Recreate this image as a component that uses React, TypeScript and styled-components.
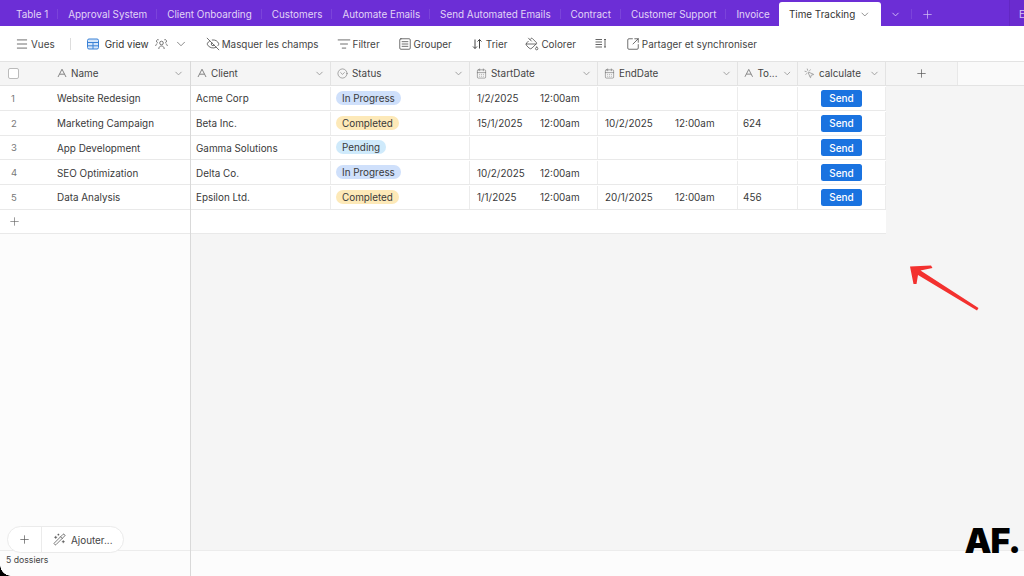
import React from "react";
import styled, { createGlobalStyle } from "styled-components";
import {
  ChevronDown,
  CircleChevronDown,
  EyeOff,
  ListFilter,
  Menu,
  MousePointerClick,
  PaintBucket,
  Plus,
  SquareArrowOutUpRight,
  SquareMenu,
  WandSparkles,
  CalendarDays,
} from "lucide-react";

const GlobalStyle = createGlobalStyle`
  html, body {
    margin: 0;
    padding: 0;
    height: 100%;
    overflow: hidden;
  }
  * { box-sizing: border-box; }
  body {
    font-family: Inter, "Liberation Sans", sans-serif;
    font-size: 9.9px;
    color: #3a3a3a;
  }
`;

const Page = styled.div`
  position: relative;
  width: 1024px;
  height: 576px;
  display: flex;
  flex-direction: column;
  overflow: hidden;
  background: #fff;

  &::after {
    content: "";
    position: absolute;
    left: 0;
    bottom: 0;
    width: 11px;
    height: 11px;
    background: radial-gradient(circle at 100% 0, transparent 10.5px, #000 11px);
  }
`;

const TabBar = styled.div`
  height: 26px;
  flex: none;
  display: flex;
  align-items: flex-end;
  padding-left: 6px;
  background: #6c2ed6;
  color: #e2d5f7;
`;

const Tab = styled.div`
  height: 24px;
  display: flex;
  align-items: center;
  padding: 0 10px;
  white-space: nowrap;
  position: relative;

  &:not(:nth-last-of-type(1))::after {
    content: "";
    position: absolute;
    right: 0;
    top: 7px;
    height: 10px;
    width: 1px;
    background: rgba(255, 255, 255, 0.1);
  }
`;

const ActiveTab = styled.div`
  height: 24px;
  width: 102px;
  margin-left: -1px;
  display: flex;
  align-items: center;
  gap: 4px;
  padding: 0 10px;
  background: #fff;
  color: #333;
  border-radius: 3px 3px 0 0;
  white-space: nowrap;
`;

const TabIcons = styled.div`
  display: flex;
  align-items: center;
  height: 24px;
  padding-left: 9.5px;
  color: #d6c4f5;
`;

const TabIconDivider = styled.span`
  width: 1px;
  height: 10px;
  margin: 0 9px 0 10px;
  background: rgba(255, 255, 255, 0.1);
`;

const TabEdge = styled.div`
  margin-left: auto;
  width: 15px;
  height: 26px;
  padding-left: 9px;
  line-height: 28px;
  overflow: hidden;
  color: #d6c4f5;
  background: #6a2bcf;
  border-left: 1px solid #6327c4;
`;

const Toolbar = styled.div`
  height: 35px;
  flex: none;
  display: flex;
  align-items: center;
  gap: 18px;
  padding-left: 15px;
  background: #fff;
  color: #444;
`;

const ToolGroup = styled.div`
  display: flex;
  align-items: center;
  gap: 2px;
  white-space: nowrap;
`;

const ToolDivider = styled.span`
  width: 1px;
  height: 12px;
  margin: 0 -2px 0 -3px;
  background: #ddd;
`;

const GridViewButton = styled(ToolGroup)`
  gap: 6px;
  color: #333;
`;

const Body = styled.div`
  flex: 1;
  min-height: 0;
  display: flex;
  position: relative;
`;

const LeftPane = styled.div`
  width: 191px;
  flex: none;
  display: flex;
  flex-direction: column;
  background: #fcfcfc;
  border-right: 1px solid #d9d9d9;
`;

const RightPane = styled.div`
  flex: 1;
  display: flex;
  flex-direction: column;
  background: #f5f5f5;
`;

const HeaderRow = styled.div`
  height: 25px;
  flex: none;
  display: flex;
  padding-bottom: 0;
  background: #f5f5f5;
  border-top: 1px solid #e3e3e3;
  border-bottom: 1px solid #e3e3e3;
`;

const RightHeaderRow = styled(HeaderRow)`
  background: #fafafa;
`;

const Row = styled.div<{ $table?: boolean }>`
  height: 24.75px;
  width: ${(p) => (p.$table ? "695px" : "auto")};
  flex: none;
  display: flex;
  align-items: center;
  padding-top: 1px;
  background: #fff;
  border-bottom: 1px solid #e9e9e9;
`;

const AddRow = styled(Row)`
  height: 24px;
  padding-top: 0;
`;

const RowNumber = styled.span`
  width: 57px;
  padding-left: 11px;
  flex: none;
  color: #777;
  font-size: 9.5px;
`;

const HeadCheck = styled.div`
  width: 57px;
  flex: none;
  display: flex;
  align-items: center;
  padding-left: 8px;
  padding-bottom: 1px;

  &::before {
    content: "";
    width: 9px;
    height: 9px;
    border: 1px solid #bbb;
    border-radius: 2px;
    background: #fff;
  }
`;

const HeadCell = styled.div<{ $w: number }>`
  width: ${(p) => p.$w}px;
  flex: none;
  display: flex;
  align-items: center;
  gap: 4px;
  padding: 0 5px 1px 6px;
  color: #444;
  background: #f5f5f5;
  border-right: 1px solid #e3e3e3;
  white-space: nowrap;
`;

const LeftHeadName = styled.div`
  flex: 1;
  display: flex;
  align-items: center;
  gap: 4px;
  padding: 0 6px 1px 0;
  color: #444;
`;

const HeadLabel = styled.span`
  flex: 1;
`;

const AddColumn = styled.div`
  width: 72px;
  flex: none;
  display: flex;
  align-items: center;
  justify-content: center;
  padding-bottom: 1px;
  color: #555;
  background: #f5f5f5;
  border-right: 1px solid #e8e8e8;
`;

const Cell = styled.div<{ $w: number; $center?: boolean; $date?: boolean }>`
  width: ${(p) => p.$w}px;
  height: 100%;
  flex: none;
  display: flex;
  align-items: center;
  justify-content: ${(p) => (p.$center ? "center" : "flex-start")};
  padding: 0 ${(p) => (p.$date ? 7 : 5)}px;
  border-right: 1px solid #ececec;
  white-space: nowrap;
`;

const PILL_COLORS = {
  "In Progress": "#cfe0fb",
  Completed: "#fde9b8",
  Pending: "#cfeafb",
} as const;

const Pill = styled.span<{ $status: keyof typeof PILL_COLORS }>`
  height: 14px;
  margin-top: -1px;
  padding: 0 6px;
  display: inline-flex;
  align-items: center;
  border-radius: 7px;
  background: ${(p) => PILL_COLORS[p.$status]};
`;

const DateText = styled.span<{ $w: number }>`
  width: ${(p) => p.$w}px;
  flex: none;
`;

const SendButton = styled.button`
  width: 41px;
  height: 17px;
  padding: 0;
  border: 0;
  border-radius: 2.5px;
  background: #1a73e0;
  color: #fff;
  font: 500 10px Inter, "Liberation Sans", sans-serif;
`;

const AddRowButton = styled.div`
  padding-left: 8px;
  display: flex;
  color: #666;
`;

const Spacer = styled.div`
  flex: 1;
`;

const Footer = styled.div`
  height: 26px;
  flex: none;
  padding: 4px 6px 0;
  background: #fcfcfc;
  border-top: 1px solid #ececec;
  font-size: 8.7px;
  color: #444;
`;

const FloatingAdd = styled.div`
  position: absolute;
  left: 7px;
  bottom: 23px;
  width: 117px;
  height: 27px;
  display: flex;
  align-items: center;
  background: #fff;
  border: 1px solid #ebebeb;
  border-radius: 14px;
`;

const FloatingPlus = styled.div`
  width: 34px;
  height: 100%;
  flex: none;
  display: flex;
  align-items: center;
  justify-content: center;
  border-right: 1px solid #ebebeb;
  color: #555;
`;

const FloatingLabel = styled.div`
  display: flex;
  align-items: center;
  gap: 5px;
  padding-left: 11px;
  color: #444;
`;

const Annotation = styled.svg`
  position: absolute;
  left: 900px;
  top: 260px;
`;

const Logo = styled.div`
  position: absolute;
  right: 4px;
  bottom: 23px;
  font: 900 34px/25px Inter, "Liberation Sans", sans-serif;
  letter-spacing: -1px;
  color: #000;
`;

function LetterIcon() {
  return (
    <svg width="10" height="10" viewBox="0 0 10 10" fill="none" stroke="#777" strokeWidth="0.9">
      <path d="M1 9 5 1.2 9 9M2.6 6.2h4.8" />
    </svg>
  );
}

function GridIcon() {
  return (
    <svg width="12" height="12" viewBox="0 0 12 12" fill="#d6e6fa" stroke="#3b82d6" strokeWidth="1">
      <rect x="0.5" y="1" width="11" height="10" rx="1.5" />
      <path d="M0.5 4.5h11M0.5 7.8h11M6 4.5V11" />
    </svg>
  );
}

function CollabIcon() {
  return (
    <svg width="13" height="12" viewBox="0 0 13 12" fill="none" stroke="#666" strokeWidth="0.9">
      <circle cx="6.5" cy="5" r="1.8" />
      <path d="M3.8 11c0-2 1.2-3 2.7-3s2.7 1 2.7 3" />
      <path d="M2.7 4.6a1.5 1.5 0 1 1 1-2.8M0.7 8c0-1.2.6-2 1.6-2.2M10.3 4.6a1.5 1.5 0 1 0-1-2.8M12.3 8c0-1.2-.6-2-1.6-2.2" />
    </svg>
  );
}

function SortIcon() {
  return (
    <svg width="14" height="12" viewBox="0 0 14 12" fill="none" stroke="#444" strokeWidth="1">
      <path d="M5 1.5v9M3 8.5l2 2 2-2M9.5 10.5v-9M7.5 3.5l2-2 2 2" />
    </svg>
  );
}

function RowHeightIcon() {
  return (
    <svg width="14" height="11" viewBox="-1 0 14 11" fill="none" stroke="#555" strokeWidth="0.9">
      <path d="M0.5 1.5h6.5M0.5 4h6.5M0.5 6.5h6.5M0.5 9h6.5M10 1.5v7.5M9 1.5h2M9 9h2" />
    </svg>
  );
}

const ICON = { strokeWidth: 1.3 };
const HEAD_ICON = { size: 11, color: "#666", strokeWidth: 1.2 };
const TABS = [
  "Table 1",
  "Approval System",
  "Client Onboarding",
  "Customers",
  "Automate Emails",
  "Send Automated Emails",
  "Contract",
  "Customer Support",
  "Invoice",
];
const WIDTHS = [140, 139, 128, 140, 60, 88];
const HEADERS = [
  { label: "Client", icon: <LetterIcon /> },
  { label: "Status", icon: <CircleChevronDown {...HEAD_ICON} /> },
  { label: "StartDate", icon: <CalendarDays {...HEAD_ICON} /> },
  { label: "EndDate", icon: <CalendarDays {...HEAD_ICON} /> },
  { label: "To...", icon: <LetterIcon /> },
  { label: "calculate", icon: <MousePointerClick {...HEAD_ICON} /> },
];

type Status = keyof typeof PILL_COLORS;
const ROWS: {
  name: string;
  client: string;
  status: Status;
  start?: string;
  end?: string;
  total?: string;
}[] = [
  { name: "Website Redesign", client: "Acme Corp", status: "In Progress", start: "1/2/2025" },
  {
    name: "Marketing Campaign",
    client: "Beta Inc.",
    status: "Completed",
    start: "15/1/2025",
    end: "10/2/2025",
    total: "624",
  },
  { name: "App Development", client: "Gamma Solutions", status: "Pending" },
  { name: "SEO Optimization", client: "Delta Co.", status: "In Progress", start: "10/2/2025" },
  {
    name: "Data Analysis",
    client: "Epsilon Ltd.",
    status: "Completed",
    start: "1/1/2025",
    end: "20/1/2025",
    total: "456",
  },
];

function App(): JSX.Element {
  return (
    <Page>
      <GlobalStyle />
      <TabBar>
        {TABS.map((t) => (
          <Tab key={t}>{t}</Tab>
        ))}
        <ActiveTab>
          Time Tracking
          <ChevronDown size={13} color="#555" {...ICON} />
        </ActiveTab>
        <TabIcons>
          <ChevronDown size={11} />
          <TabIconDivider />
          <Plus size={13} {...ICON} />
        </TabIcons>
        <TabEdge>E</TabEdge>
      </TabBar>

      <Toolbar>
        <ToolGroup>
          <Menu size={14} {...ICON} />
          Vues
        </ToolGroup>
        <ToolDivider />
        <GridViewButton>
          <GridIcon />
          Grid view
          <CollabIcon />
          <ChevronDown size={14} color="#666" {...ICON} />
        </GridViewButton>
        <ToolGroup>
          <EyeOff size={14} {...ICON} />
          Masquer les champs
        </ToolGroup>
        <ToolGroup>
          <ListFilter size={14} {...ICON} />
          Filtrer
        </ToolGroup>
        <ToolGroup>
          <SquareMenu size={14} {...ICON} />
          Grouper
        </ToolGroup>
        <ToolGroup>
          <SortIcon />
          Trier
        </ToolGroup>
        <ToolGroup>
          <PaintBucket size={14} {...ICON} />
          Colorer
        </ToolGroup>
        <RowHeightIcon />
        <ToolGroup>
          <SquareArrowOutUpRight size={14} {...ICON} />
          Partager et synchroniser
        </ToolGroup>
      </Toolbar>

      <Body>
        <LeftPane>
          <HeaderRow>
            <HeadCheck />
            <LeftHeadName>
              <LetterIcon />
              <HeadLabel>Name</HeadLabel>
              <ChevronDown size={11} color="#999" />
            </LeftHeadName>
          </HeaderRow>
          {ROWS.map((r, i) => (
            <Row key={r.name}>
              <RowNumber>{i + 1}</RowNumber>
              {r.name}
            </Row>
          ))}
          <AddRow>
            <AddRowButton>
              <Plus size={13} strokeWidth={1.2} />
            </AddRowButton>
          </AddRow>
          <Spacer />
          <Footer>5 dossiers</Footer>
        </LeftPane>

        <RightPane>
          <RightHeaderRow>
            {HEADERS.map((h, i) => (
              <HeadCell key={h.label} $w={WIDTHS[i]}>
                {h.icon}
                <HeadLabel>{h.label}</HeadLabel>
                <ChevronDown size={11} color="#999" />
              </HeadCell>
            ))}
            <AddColumn>
              <Plus size={13} {...ICON} />
            </AddColumn>
          </RightHeaderRow>
          {ROWS.map((r) => (
            <Row key={r.name} $table>
              <Cell $w={WIDTHS[0]}>{r.client}</Cell>
              <Cell $w={WIDTHS[1]}>
                <Pill $status={r.status}>{r.status}</Pill>
              </Cell>
              <Cell $w={WIDTHS[2]} $date>
                {r.start && (
                  <>
                    <DateText $w={63}>{r.start}</DateText>
                    12:00am
                  </>
                )}
              </Cell>
              <Cell $w={WIDTHS[3]} $date>
                {r.end && (
                  <>
                    <DateText $w={70}>{r.end}</DateText>
                    12:00am
                  </>
                )}
              </Cell>
              <Cell $w={WIDTHS[4]}>{r.total}</Cell>
              <Cell $w={WIDTHS[5]} $center>
                <SendButton>Send</SendButton>
              </Cell>
            </Row>
          ))}
          <AddRow $table />
          <Spacer />
          <Footer />
        </RightPane>

        <FloatingAdd>
          <FloatingPlus>
            <Plus size={13} {...ICON} />
          </FloatingPlus>
          <FloatingLabel>
            <WandSparkles size={13} {...ICON} />
            Ajouter...
          </FloatingLabel>
        </FloatingAdd>
      </Body>

      <Annotation width="90" height="60" viewBox="900 260 90 60">
        <polygon
          points="910,266.5 931,265.5 932.5,268 920.5,270.5 978.5,308 977,310.5 918,275 916.5,284 913.5,284"
          fill="#f3312f"
        />
      </Annotation>
      <Logo>AF.</Logo>
    </Page>
  );
}

export default App;
